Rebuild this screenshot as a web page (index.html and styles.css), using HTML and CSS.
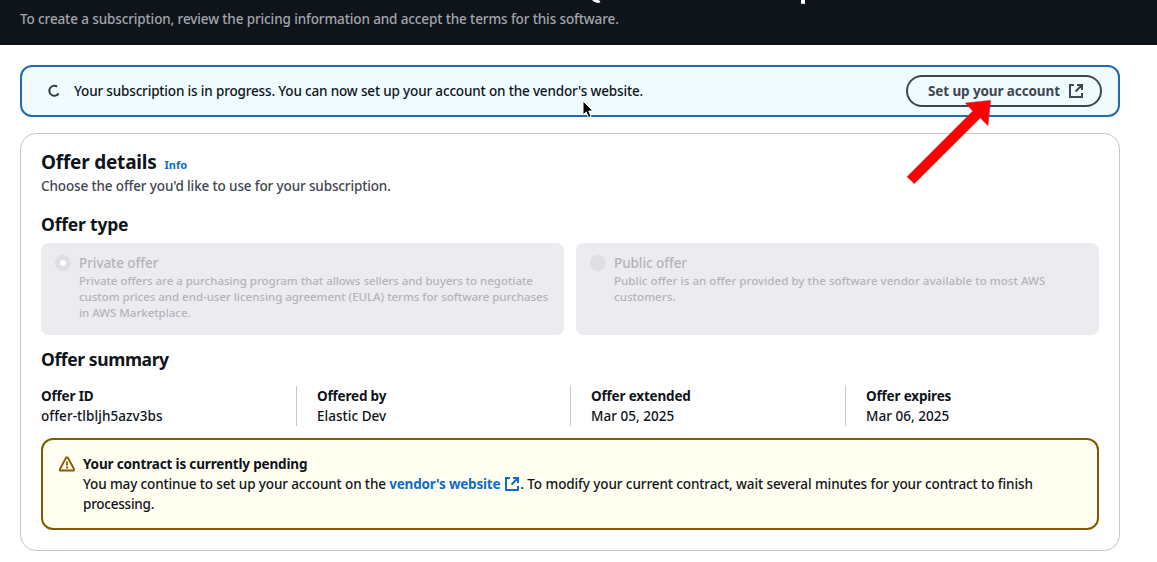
FILE: index.html
```
<!DOCTYPE html>
<html lang="en">
<head>
<meta charset="utf-8">
<title>Subscribe</title>
<link rel="stylesheet" href="styles.css">
</head>
<body>
<header class="hero">
  <svg class="hero-title" width="240" height="5" viewBox="0 0 240 5"><path d="M0 0h7l1.500 2.300-2.500.8C3.500 2.500 1.500 1.500 0 0z" fill="#fff"/><path d="M209 0h4v3.800h-4z" fill="#fff"/></svg>
  <p class="hero-text">To create a subscription, review the pricing information and accept the terms for this software.</p>
</header>
<main class="content">
  <section class="flash">
    <svg class="spinner" width="16" height="16" viewBox="0 0 16 16"><path d="M11.100 3.600A5 5 0 1 0 12.600 10.400" fill="none" stroke="#333843" stroke-width="2"/></svg>
    <p class="flash-text">Your subscription is in progress. You can now set up your account on the vendor's website.</p>
    <button class="button"><span>Set up your account</span>
      <svg width="16" height="16" viewBox="0 0 16 16" fill="none" stroke="currentColor" stroke-width="2"><path d="M6 2H2v12h12v-4M9 2h5v5M14 2 7.500 8.500"/></svg>
    </button>
  </section>
  <section class="card">
    <div class="heading"><h2>Offer details</h2><a class="info">Info</a></div>
    <p class="description">Choose the offer you'd like to use for your subscription.</p>
    <h3 class="type-title">Offer type</h3>
    <div class="tiles">
      <div class="tile"><span class="radio checked"></span>
        <div><p class="tile-title">Private offer</p><p class="tile-text">Private offers are a purchasing program that allows sellers and buyers to negotiate<br>custom prices and end-user licensing agreement (EULA) terms for software purchases<br>in AWS Marketplace.</p></div>
      </div>
      <div class="tile"><span class="radio"></span>
        <div><p class="tile-title">Public offer</p><p class="tile-text public-text">Public offer is an offer provided by the software vendor available to most AWS<br>customers.</p></div>
      </div>
    </div>
    <h3 class="summary-title">Offer summary</h3>
    <dl class="summary">
      <div><dt>Offer ID</dt><dd class="offer-id">offer-tlbljh5azv3bs</dd></div>
      <div><dt>Offered by</dt><dd>Elastic Dev</dd></div>
      <div><dt>Offer extended</dt><dd>Mar 05, 2025</dd></div>
      <div><dt>Offer expires</dt><dd>Mar 06, 2025</dd></div>
    </dl>
    <div class="warning">
      <svg width="16" height="16" viewBox="0 0 16 16" fill="none" stroke="#855900" stroke-width="1.800" stroke-linejoin="round"><path d="M7.200 1.500h1.600L15 13v1.500H1V13zM8 5.500v4M8 10.500v2"/></svg>
      <div><h4>Your contract is currently pending</h4>
      <p><span class="before-link">You may continue to set up your account on the </span><a class="link">vendor's website</a><svg class="external" width="16" height="16" viewBox="0 0 16 16" fill="none" stroke="#0f6ccb" stroke-width="2"><path d="M6 2H2v12h12v-4M9 2h5v5M14 2 7.500 8.500"/></svg><span class="after-link">. To modify your current contract, wait several minutes for your contract to finish</span><br><span class="last-line">processing.</span></p></div>
    </div>
  </section>
</main>
<svg class="arrow" width="90" height="100" viewBox="0 0 90 100"><path d="M2 86.700 67.700 21 60.300 13 85.700 10.300 83 35.700 75.300 28 9.300 93.700z" fill="#f00" stroke="#9a5151" stroke-width=".5"/></svg>
<svg class="cursor" width="12" height="20" viewBox="0 0 12 20"><path d="M1 1v14l3.300-3 2.200 5.500 2.500-1L6.800 11H11z" fill="#000" stroke="#fff"/></svg>
</body>
</html>
```
FILE: styles.css
```
* { box-sizing: border-box; margin: 0; padding: 0; }
body { width: 1157px; height: 562px; overflow: hidden; background: #fff; color: #0f141a; font: 500 13.5px/20px "Noto Sans", sans-serif; white-space: nowrap; }
svg { display: block; flex: none; }
.hero { height: 45px; background: #0f141a; color: #a4a4ad; padding: 0 20px; }
.hero-title { margin-left: 572px; }
.hero-text { padding-top: 4px; letter-spacing: -.118px; }
.content { padding: 20px 37px 0 20px; }
.flash { height: 52px; display: flex; align-items: center; border: 2px solid #2469b3; border-radius: 12px; background: #f0fbff; padding: 0 16px 0 24px; }
.flash-text { margin-left: 12px; letter-spacing: -.162px; }
.button { margin-left: auto; width: 196px; height: 32px; display: flex; align-items: center; justify-content: space-between; padding: 0 16px 0 20px; border: 2px solid #424650; border-radius: 20px; background: transparent; color: #424650; font: 700 13.5px/20px "Noto Sans", sans-serif; letter-spacing: -.11px; }
.card { height: 418px; margin-top: 16px; border: 1px solid #c6c6cd; border-radius: 16px; padding: 15px 20px; }
.heading { display: flex; align-items: baseline; gap: 8px; height: 27px; }
h2 { font-size: 19px; line-height: 26px; font-weight: 700; letter-spacing: -.22px; }
.info { color: #0f6ccb; font-size: 11px; line-height: 16px; font-weight: 700; }
.description { color: #424650; letter-spacing: -.135px; }
h3 { font-size: 17.5px; line-height: 22px; font-weight: 700; letter-spacing: -.2px; }
.type-title { margin: 17px 0 8px; }
.tiles { display: grid; grid-template-columns: repeat(2, minmax(0, 1fr)); gap: 12px; height: 92px; }
.tile { display: flex; gap: 8px; background: #ebebf0; border-radius: 8px; padding: 10px 14px; color: #b4b4bb; }
.radio { width: 16px; height: 16px; margin-top: 2px; border-radius: 50%; background: #dedee3; flex: none; }
.checked { border: 5px solid #dedee3; background: #fff; }
.tile-title { letter-spacing: -.07px; }
.tile-text { font-size: 11.5px; line-height: 16px; font-weight: 500; letter-spacing: -.026px; }
.public-text { letter-spacing: .052px; }
.summary-title { margin-top: 13px; letter-spacing: -.39px; }
.summary { display: grid; grid-template-columns: 255px 274px 275px 1fr; margin-top: 16px; height: 40px; }
.summary > div + div { border-left: 1px solid #c6c6cd; padding-left: 20px; }
dt { font-weight: 700; letter-spacing: -.18px; }
dd { letter-spacing: .03px; }
.offer-id { letter-spacing: .07px; }
.warning { display: flex; gap: 8px; height: 92px; margin-top: 12px; padding: 14px 16px; border: 2px solid #855900; border-radius: 12px; background: #fffef0; }
.warning > svg { margin-top: 2px; }
h4 { font-size: 13.5px; font-weight: 700; letter-spacing: -.16px; }
.before-link { white-space: pre; letter-spacing: -.127px; }
.link { color: #0f6ccb; font-weight: 700; letter-spacing: -.21px; }
.external { display: inline-block; vertical-align: -3px; margin-left: 4px; }
.after-link { letter-spacing: -.095px; }
.last-line { letter-spacing: -.23px; }
.arrow { position: absolute; left: 905px; top: 90px; overflow: visible; }
.cursor { position: absolute; left: 582px; top: 100px; }
```
